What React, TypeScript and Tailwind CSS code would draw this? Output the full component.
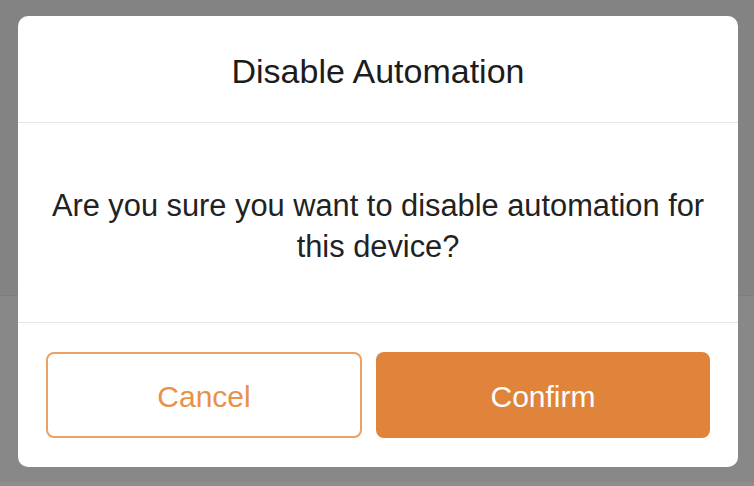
import React from 'react';

// Confirmation modal shown over a dimmed page
export default function App() {
  return (
    <div
      className="relative w-[754px] h-[486px] overflow-hidden"
      style={{ fontFamily: '"Liberation Sans", Arial, sans-serif' }}
    >
      {/* dimmed page behind the modal */}
      <div className="flex flex-col h-full">
        <div className="h-[295px] bg-[#838383]" />
        <div className="h-[1px] bg-[#7c7c7c]" />
        <div className="flex-1 bg-[#888888]" />
        <div className="h-[4px] bg-[#8d8d8d]" />
      </div>

      {/* modal */}
      <div className="absolute left-[18px] top-[16px] w-[720px] h-[451px] bg-white rounded-[10px] flex flex-col">
        <div className="h-[107px] flex items-center justify-center pt-[5px] border-b border-[#e6e6e6]">
          <h2 className="text-[34px] text-[#1c1c1c]">Disable Automation</h2>
        </div>

        <div className="h-[200px] flex items-center justify-center pt-[6px] border-b border-[#e6e6e6]">
          <p className="text-[30.8px] leading-[41px] text-[#222] text-center">
            Are you sure you want to disable automation for
            <br />
            this device?
          </p>
        </div>

        <div className="flex-1 flex gap-[14px] px-[28px] pt-[29px] pb-[29px]">
          <button className="w-[316px] shrink-0 rounded-[8px] border-2 border-[#eba064] text-[#e8914a] text-[30px] pt-[2px]">
            Cancel
          </button>
          <button className="w-[334px] shrink-0 rounded-[8px] bg-[#e1843b] text-white text-[30px] pt-[2px]">
            Confirm
          </button>
        </div>
      </div>
    </div>
  );
}
